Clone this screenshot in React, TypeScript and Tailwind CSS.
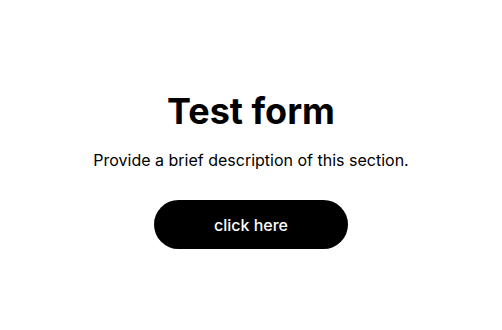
import React from 'react';

const App: React.FC = () => {
  return (
    <div className="min-h-[330px] bg-white flex flex-col items-center pt-[91px] font-['Inter',sans-serif] text-black">
      <h1 className="text-4xl font-bold leading-[40px]">Test form</h1>
      <p className="mt-[17px] text-base leading-6">Provide a brief description of this section.</p>
      <button className="mt-[28px] w-[194px] h-[49px] rounded-full bg-black text-white text-base font-medium">
        click here
      </button>
    </div>
  );
};

export default App;
